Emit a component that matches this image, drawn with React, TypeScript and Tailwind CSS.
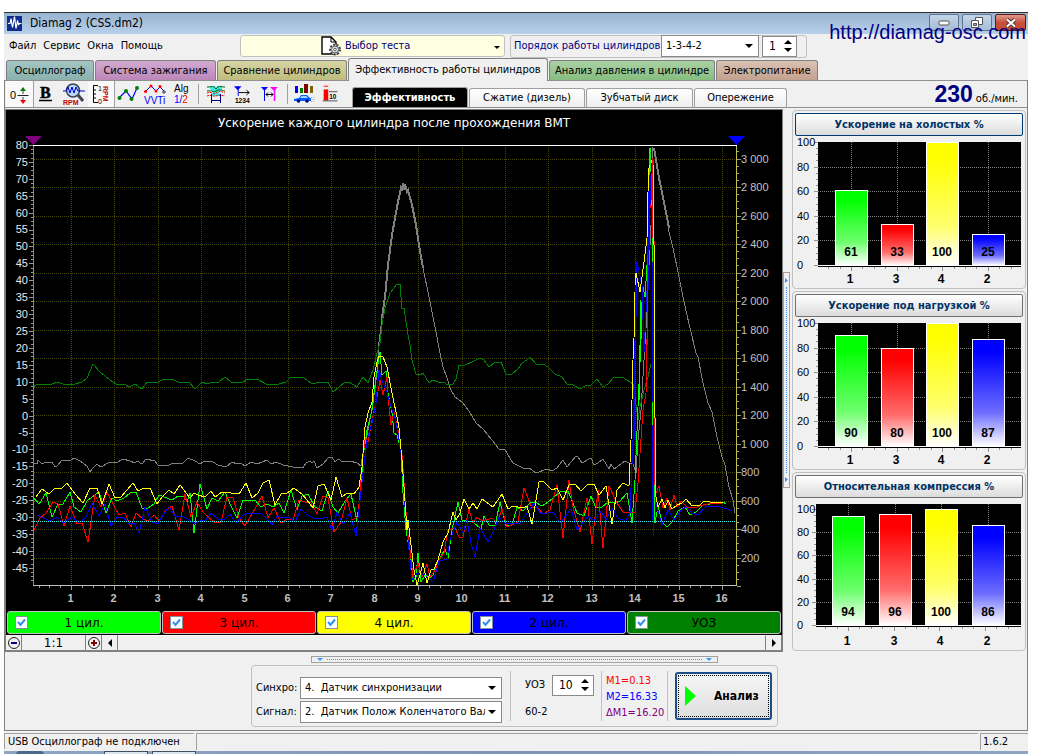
import { useState } from 'react';
import type { ReactNode } from 'react';

const UI_FONT = "font-['DejaVu_Sans_Condensed','DejaVu_Sans',sans-serif]";

const pageTabs = [
  { label: 'Осциллограф', tone: 'from-[#a3c6c4] to-[#8bb0ae]', width: 'w-[88px]' },
  { label: 'Система зажигания', tone: 'from-[#d3aad1] to-[#bb88b9]', width: 'w-[121px]' },
  { label: 'Сравнение цилиндров', tone: 'from-[#d6d4a4] to-[#bfbc7e]', width: 'w-[130px]' },
  { label: 'Эффективность работы цилиндров', tone: 'from-[#f0f0f0] to-[#f0f0f0]', width: 'w-[200px]' },
  { label: 'Анализ давления в цилиндре', tone: 'from-[#abd1a5] to-[#86bd80]', width: 'w-[166px]' },
  { label: 'Электропитание', tone: 'from-[#dac2b4] to-[#c3a18f]', width: 'w-[102px]' },
];

const viewTabs = [
  { label: 'Эффективность', width: 'w-[116px]' },
  { label: 'Сжатие (дизель)', width: 'w-[116px]' },
  { label: 'Зубчатый диск', width: 'w-[107px]' },
  { label: 'Опережение', width: 'w-[93px]' },
];

const legend = [
  { label: '1 цил.', bg: 'bg-[#00ff00]' },
  { label: '3 цил.', bg: 'bg-[#ff0000]' },
  { label: '4 цил.', bg: 'bg-[#ffff00]' },
  { label: '2 цил.', bg: 'bg-[#0000ff]' },
  { label: 'УОЗ', bg: 'bg-[#008000]' },
];

const SPEED_A =
  '33,463 37,464 38,460 42,464 46,462 48,463 52,462 55,467 57,466 62,460 70,461 74,458 80,461 87,466 90,472 93,468 97,464 101,467 108,463 118,462 123,459 130,461 135,463 137,461 142,464 146,459 155,461 158,465 167,466 173,463 183,463 188,458 195,461 200,464 205,461 213,462 218,465 226,467 232,462 237,464 241,463 245,466 251,462 257,464 267,460 271,464 276,462 283,465 293,467 303,468 306,463 310,461 312,463 314,461 317,468 323,464 328,458 332,457 335,462 338,459 343,462 350,461 357,463 361,466 363,453 368,430 373,403 377,373 379,342 382,318';
const SPEED_PEAK =
  '382,318 385,297 388,265 392,235 395,218 398,202 401,188 402,191 403,183 404,190 405,184 407,192 408,190 412,205 416,225 419,245 423,268';
const SPEED_B =
  '423,268 428,292 432,312 436,332 440,353 443,367 447,378 450,388 455,397 462,402 469,411 476,423 483,429 492,440 499,449 505,450 513,463 523,468 529,468 536,473 547,469 552,471 557,468 563,460 567,467 576,456 578,457 582,463 591,458 594,465 598,463 603,459 609,469 611,464 614,469 625,461 629,463 633,464 636,473 638,440 641,410 644,360 647,312 649,265 652,205 653,147';
const SPEED_FALL =
  '654,148 659,178 664,202 669,232 673,248 678,272 684,302 690,328 696,353 698,357 703,383 708,403 712,412 717,437 722,457 725,465 729,487 733,500 735,513';
const ADVANCE =
  '33,387 38,384 52,384 57,382 63,384 75,384 82,382 87,378 93,364 100,372 110,380 116,384 125,384 129,387 135,384 142,389 147,382 158,382 164,379 172,379 178,382 189,382 195,389 202,382 207,384 213,382 219,382 225,377 231,382 243,382 248,379 257,379 266,384 279,384 286,382 291,377 303,377 312,384 320,382 328,382 333,392 345,382 349,382 357,387 363,377 368,383 373,370 377,353 380,343 382,325 385,308 390,293 397,284 400,284 402,309 404,308 408,335 410,345 412,360 416,374 420,375 423,373 429,383 433,380 438,382 444,382 447,385 453,384 456,379 459,365 463,366 467,364 472,362 480,358 484,360 489,367 495,362 501,362 506,374 512,374 518,369 522,363 527,360 530,357 536,364 543,364 548,367 555,374 562,377 567,384 573,385 580,389 585,386 591,385 597,379 603,387 608,384 614,377 622,377 627,380 633,384 635,397 638,420 640,407 644,390 648,377 651,364';
const CYL_4 =
  '36,497 42,489 49,494 55,488 61,489 67,483 75,494 83,503 90,488 97,488 102,504 109,484 115,498 121,497 133,483 138,491 144,488 150,488 157,504 162,497 169,490 174,494 180,485 190,498 194,493 198,495 205,497 211,491 215,497 222,492 239,494 246,483 252,498 258,493 263,483 269,480 275,505 281,494 287,493 294,488 302,494 307,500 313,508 318,486 324,484 331,500 336,477 342,497 347,493 354,494 359,487 362,467 365,427 368,413 372,402 374,377 377,362 379,356 383,357 387,367 392,393 397,417 399,428 402,460 404,487 407,530 408,520 412,553 414,570 417,585 420,575 423,563 427,583 431,570 434,569 438,560 443,542 448,533 453,512 456,520 460,513 464,499 469,509 473,503 477,509 482,499 493,507 502,494 508,509 513,506 523,508 527,506 532,524 539,482 543,481 552,490 557,488 563,500 569,485 575,484 581,491 587,485 594,484 599,495 606,486 612,524 617,490 623,483 629,486 631,440 633,360 634,338 635,292 636,273 640,292 644,262 647,238 648,192 649,168 652,160 654,245 654,353 655,440 656,497 658,507 662,499 665,508 668,500 672,509 677,505 682,503 686,499 692,506 700,505 704,501 710,502 720,502 723,503';
const CYL_1 =
  '33,497 39,504 46,493 52,517 58,504 63,504 70,492 74,507 81,512 87,501 99,492 106,513 112,498 117,501 124,498 130,493 136,492 142,508 148,508 154,504 159,495 172,500 178,496 184,497 187,502 190,493 194,533 200,484 207,509 212,498 218,501 225,492 231,506 237,518 243,500 255,500 261,507 267,504 273,507 279,503 284,513 291,490 297,510 302,496 308,494 315,507 322,511 328,491 333,507 338,513 345,501 351,494 357,521 361,487 363,457 367,430 372,410 376,377 380,352 382,375 386,371 388,393 392,413 394,433 397,435 401,450 403,493 406,530 410,553 413,582 416,577 418,553 421,582 425,575 430,578 433,575 437,563 445,549 448,558 452,530 458,502 462,520 473,522 481,529 484,516 489,525 495,526 500,502 506,526 512,525 517,507 523,511 530,503 535,502 542,506 548,502 553,498 560,492 568,491 577,513 584,516 591,496 596,508 602,507 608,502 615,503 620,501 627,493 632,523 635,480 638,407 641,340 642,302 643,287 645,297 647,265 648,215 650,148 651,172 653,262 654,403 655,523 658,506 662,522 667,527 672,522 678,511 685,507 690,515 696,512 703,505 717,503 723,502 726,504';
const CYL_3 =
  '33,532 40,518 46,513 53,502 58,504 64,526 70,506 77,524 82,523 88,542 95,495 101,507 107,492 114,506 119,515 125,513 131,527 136,513 143,519 148,521 154,515 159,521 166,510 172,506 179,530 185,494 191,517 197,502 203,512 215,523 221,522 227,497 233,498 239,518 245,526 256,507 262,496 268,518 274,508 281,523 287,519 293,520 299,500 305,502 311,503 317,514 323,496 328,498 334,532 341,522 347,498 352,520 358,517 362,467 365,438 368,442 372,420 376,403 380,380 383,395 387,377 388,397 391,425 394,412 398,430 402,455 404,483 407,527 410,550 413,577 418,563 422,577 427,564 430,577 435,570 440,558 444,553 448,530 455,528 459,537 463,537 469,509 473,523 477,517 482,521 492,518 497,523 502,509 507,527 518,522 524,488 532,508 537,507 543,514 550,510 557,485 563,538 569,480 573,507 580,532 587,498 592,544 598,490 603,548 609,486 617,503 623,512 635,512 638,483 643,410 646,393 647,340 648,248 651,188 653,158 654,238 655,420 656,493 659,486 663,508 667,498 670,510 674,495 677,507 681,501 688,508 697,507 703,505 713,503 722,503';
const CYL_2 =
  '37,515 50,521 57,517 63,523 72,517 79,523 86,517 92,503 99,516 105,504 111,526 117,517 123,517 128,523 134,523 139,533 145,507 152,522 158,524 163,515 169,507 175,516 182,516 188,519 194,524 200,521 206,520 211,513 218,519 225,519 230,514 236,523 243,515 248,513 261,513 266,518 272,525 277,516 283,518 289,517 295,522 301,509 307,515 313,518 320,519 327,517 332,530 337,512 343,524 350,513 356,536 360,500 363,473 367,440 372,423 376,403 379,370 383,383 387,392 391,407 395,418 398,433 402,460 405,507 408,540 412,580 417,573 425,575 433,582 439,561 447,559 450,540 457,522 463,533 467,520 471,543 475,557 480,528 488,542 493,532 499,517 505,523 520,523 527,513 534,503 541,514 553,512 560,523 571,509 577,530 588,516 594,521 601,511 606,520 612,508 618,518 625,521 630,513 633,440 635,340 636,318 637,262 642,285 644,352 647,292 648,202 650,175 651,205 653,292 653,537 655,500 662,525 668,510 674,520 682,509 686,507 692,513 698,515 705,507 717,506 727,509 732,511';

// near-vertical parts of the second surge: x, from, to, colour
const SPIKES: [number, number, number, string][] = [
  [635, 285, 345, '#0000ff'],
  [634, 345, 440, '#0000ff'],
  [640, 300, 345, '#00ff00'],
  [639, 345, 400, '#00ff00'],
  [647, 255, 345, '#ff0000'],
  [649, 192, 250, '#0000ff'],
  [648, 200, 290, '#0000ff'],
  [651, 175, 200, '#ff0000'],
  [650, 148, 170, '#00ff00'],
  [652, 158, 238, '#ff0000'],
  [653, 165, 245, '#ffff00'],
  [652, 240, 262, '#00ff00'],
  [652, 262, 520, '#0000ff'],
  [653, 245, 537, '#0000ff'],
  [652, 402, 425, '#00ff00'],
  [654, 245, 418, '#ffff00'],
  [654, 418, 485, '#ff0000'],
  [655, 418, 495, '#ffff00'],
  [654, 487, 523, '#00ff00'],
];

const range = (n: number) => Array.from({ length: n }, (_, i) => i);
const px = (v: number) => Math.round(v) + 0.5;

const xAt = (v: number) => px(71 + (v - 1) * 43.4);
const yLeft = (v: number) => px(415.5 - v * 3.383);
const yRight = (v: number) => px(586 - v * 0.1425);

function AccelerationChart() {
  return (
    <svg viewBox="6 110 776 500" className="block h-auto w-full bg-black" role="img" aria-label="Ускорение каждого цилиндра">
      <text x="394" y="127" fill="#fff" fontSize="12" textAnchor="middle" fontFamily="DejaVu Sans, sans-serif">
        Ускорение каждого цилиндра после прохождения ВМТ
      </text>
      <g shapeRendering="crispEdges" fill="none" strokeWidth="1">
        <g stroke="#484800" strokeDasharray="1 1">
          {range(16).map(i => (
            <line key={i} x1={xAt(i + 1)} x2={xAt(i + 1)} y1="147" y2="585" />
          ))}
          {range(15).map(i => (
            <line key={i} x1="34" x2="736" y1={yRight((i + 1) * 200)} y2={yRight((i + 1) * 200)} />
          ))}
        </g>

        <g stroke="#808080">
          <polyline points={SPEED_A} />
          <polyline points={SPEED_PEAK} strokeWidth="2" />
          <polyline points={SPEED_B} />
          <polyline points={SPEED_FALL} />
          <polyline points="654,148 659,178 664,202 669,228" strokeWidth="2" />
        </g>
        <polyline points={ADVANCE} stroke="#008000" />
        <polyline points={CYL_1} stroke="#00ff00" />
        <polyline points={CYL_3} stroke="#ff0000" />
        <polyline points={CYL_2} stroke="#0000ff" />
        <polyline points={CYL_4} stroke="#ffff00" />
        {SPIKES.map(([x, from, to, color]) => (
          <line key={`${x}-${from}`} x1={x + 0.5} x2={x + 0.5} y1={from} y2={to} stroke={color} />
        ))}
        <line x1="34" x2="736" y1="521.5" y2="521.5" stroke="#40ffff" strokeDasharray="1 1" />

        {/* frame */}
        <line x1="33" x2="737" y1="145.5" y2="145.5" stroke="#fff" />
        <line x1="33.5" x2="33.5" y1="146" y2="586" stroke="#4cb04c" />
        <line x1="736.5" x2="736.5" y1="146" y2="586" stroke="#c0c050" />
        <line x1="33" x2="737" y1="585.5" y2="585.5" stroke="#c0c0c0" />

        {/* ticks */}
        <g stroke="#9a9a9a">
          {range(104).map(i => {
            const y = px(145 + i * 4.228);
            return y < 585 ? <line key={i} x1={i % 4 ? 31 : 29} x2="33" y1={y} y2={y} /> : null;
          })}
          {range(62).map(i => {
            const y = px(586 - i * 7.125);
            return y > 147 ? <line key={i} x1="737" x2={i % 4 ? 739 : 741} y1={y} y2={y} /> : null;
          })}
          {range(64).map(i => {
            const x = px(38.5 + i * 10.85);
            return <line key={i} x1={x} x2={x} y1="586" y2={i % 4 === 3 ? 590 : 588} />;
          })}
        </g>
      </g>
      <path d="M25 136h17l-8.500 9z" fill="#800080" />
      <path d="M728 136h17l-8.500 9z" fill="#0000ff" />
      <g fontSize="11" fill="#e8e8e8" textAnchor="end" fontFamily="Liberation Sans, sans-serif">
        {range(26).map(i => (
          <text key={i} x="28" y={yLeft(80 - i * 5) + 3.5}>
            {80 - i * 5}
          </text>
        ))}
      </g>
      <g fontSize="11" fill="#c0c0c0" fontFamily="Liberation Sans, sans-serif">
        {range(15).map(i => {
          const v = (i + 1) * 200;
          return (
            <text key={v} x="741" y={yRight(v) + 3.5}>
              {v >= 1000 ? `${Math.floor(v / 1000)} ${String(v % 1000).padStart(3, '0')}` : v}
            </text>
          );
        })}
      </g>
      <g fontSize="11" fill="#c0c0c0" fontWeight="bold" textAnchor="middle" fontFamily="Liberation Sans, sans-serif">
        {range(16).map(i => (
          <text key={i} x={xAt(i + 1) - 1} y="602">
            {i + 1}
          </text>
        ))}
      </g>
    </svg>
  );
}

const bars = [
  { name: '1', color: '#00ff00', mid: '#6cff6c' },
  { name: '3', color: '#ff0000', mid: '#ff6c6c' },
  { name: '4', color: '#ffff00', mid: '#ffff6c' },
  { name: '2', color: '#0000ff', mid: '#6c6cff' },
];

type BarPanelProps = {
  id: string;
  title: string;
  values: number[];
  centers: number[];
  left: number;
  full: number;
  base: number;
  active?: boolean;
};

function BarPanel({ id, title, values, centers, left, full, base, active }: BarPanelProps) {
  const y = (v: number) => Math.round(base - ((base - full) * v) / 100);
  const step = (base - full) / 20;
  return (
    <section className="rounded-[4px] border border-[#c0c0c0] p-[2px]">
      <button
        type="button"
        className={`block h-[23px] w-full rounded-[2px] border bg-linear-to-b from-white to-[#dcdcdc] text-center text-[11px] leading-[20px] font-bold text-[#003366] ${
          active ? 'border-[#003c74]' : 'border-[#707070]'
        }`}
      >
        {title}
      </button>
      <svg viewBox="-1 0 228 150" className="block h-auto w-full" role="img" aria-label={title}>
        <defs>
          {bars.map(b => (
            <linearGradient key={b.name} id={`${id}-${b.name}`} x1="0" y1="0" x2="0" y2="1">
              <stop offset="0.120" stopColor={b.color} />
              <stop offset="0.680" stopColor={b.mid} />
              <stop offset="1" stopColor="#fff" />
            </linearGradient>
          ))}
        </defs>
        <g shapeRendering="crispEdges">
          <rect x={left} y="6" width={225 - left} height={base - 4} fill="#000" />
          <g stroke="#808080" strokeDasharray="1 1">
            {[20, 40, 60, 80].map(v => (
              <line key={v} x1={left} x2="225" y1={y(v) + 0.5} y2={y(v) + 0.5} />
            ))}
            {centers.map(c => (
              <line key={c} x1={c + 0.5} x2={c + 0.5} y1="6" y2={base} />
            ))}
          </g>
          <g stroke="#909090">
            {range(21).map(i => (
              <line key={i} x1={left - (i % 4 ? 2 : 4)} x2={left} y1={px(base - i * step)} y2={px(base - i * step)} />
            ))}
            {range(17).map(i => {
              const x = px(centers[0] + (i - 2) * 11.4);
              return <line key={i} x1={x} x2={x} y1={base + 2} y2={base + (i % 4 === 2 ? 6 : 4)} />;
            })}
          </g>
          <line x1={left} x2="225" y1={base + 0.5} y2={base + 0.5} stroke="#fff" />
          {bars.map((b, i) => (
            <rect
              key={b.name}
              x={centers[i] - 15.5}
              y={y(values[i]) + 0.5}
              width="32"
              height={base - y(values[i])}
              fill={`url(#${id}-${b.name})`}
              stroke="#fff"
            />
          ))}
        </g>
        <g fontSize="11" fill="#000" fontFamily="Liberation Sans, sans-serif">
          {[0, 20, 40, 60, 80, 100].map(v => (
            <text key={v} x="1" y={y(v) + 4}>
              {v}
            </text>
          ))}
        </g>
        <g fontSize="12" fontWeight="bold" textAnchor="middle" fontFamily="Liberation Sans, sans-serif">
          {bars.map((b, i) => (
            <g key={b.name}>
              <text x={centers[i]} y={base - 9}>
                {values[i]}
              </text>
              <text x={centers[i] - 1} y="147">
                {b.name}
              </text>
            </g>
          ))}
        </g>
      </svg>
    </section>
  );
}

function ToolButton({ label, pressed, width, children }: { label: string; pressed?: boolean; width: string; children: ReactNode }) {
  return (
    <button
      type="button"
      aria-label={label}
      aria-pressed={pressed}
      className={`flex h-[26px] shrink-0 items-center justify-center ${width} ${pressed ? 'border-r border-[#a0a0a0] bg-[#f9f9f9]' : ''}`}
    >
      <svg viewBox="0 0 24 24" className="size-6" fill="none">
        {children}
      </svg>
    </button>
  );
}

function Separator() {
  return <span className="h-[20px] w-px shrink-0 bg-[#a0a0a0]" />;
}

function Toolbar() {
  return (
    <div className="flex items-center" role="toolbar">
      <ToolButton label="Ноль" pressed width="w-[28px]">
        <text x="2" y="17" fontSize="11" fill="#000" fontFamily="Liberation Sans, sans-serif">0</text>
        <path d="M9.500 13.500h11" stroke="#222" />
        <path d="M15 7v5M15 15v4" stroke="#444" />
        <path d="M15 5l3 4h-6z" fill="#008000" />
        <path d="M15 22l3-4h-6z" fill="#ff0000" />
      </ToolButton>
      <ToolButton label="Жирные линии" width="w-[25px]">
        <text x="5" y="16" fontSize="16" fontWeight="bold" fill="#000" stroke="#000" strokeWidth="0.500" fontFamily="Liberation Serif, serif">B</text>
        <path d="M4 18.500h13" stroke="#000" strokeWidth="1.500" />
      </ToolButton>
      <ToolButton label="Поиск RPM" width="w-[29px]">
        <circle cx="11" cy="8.500" r="6.500" fill="#b5d9f8" stroke="#3d4450" strokeWidth="1.500" />
        <path d="M1 9h3l2-4 2 6 2-6 2 6 2-6 2 4h7" stroke="#0000d0" strokeWidth="1" />
        <path d="M16 13l5 6" stroke="#3d4450" strokeWidth="3" />
        <text x="1" y="23" fontSize="7" fontWeight="bold" fill="#c00000" fontFamily="Liberation Sans, sans-serif">RPM</text>
      </ToolButton>
      <ToolButton label="Шкала RPM" pressed width="w-[27px]">
        <path d="M9 3.500H4.500v17H9M4.500 8H7M4.500 12H7M4.500 16H7" stroke="#000" />
        <text x="9" y="9" fontSize="7" fill="#000" fontFamily="Liberation Sans, sans-serif">1</text>
        <text x="9" y="22" fontSize="7" fill="#000" fontFamily="Liberation Sans, sans-serif">0</text>
        <text x="4" y="-14" fontSize="7" fontWeight="bold" fill="#c00000" transform="rotate(90)" fontFamily="Liberation Sans, sans-serif">RPM</text>
      </ToolButton>
      <ToolButton label="Точки" width="w-[25px]">
        <path d="M3 16l7-7 6 8 5-11" stroke="#0000ff" strokeWidth="1.200" />
        <g fill="#008000">
          <circle cx="3.500" cy="16" r="2" />
          <circle cx="10" cy="9" r="2" />
          <circle cx="15.500" cy="17" r="2" />
          <circle cx="21" cy="6" r="2" />
        </g>
      </ToolButton>
      <ToolButton label="VVTi" width="w-[29px]">
        <path d="M2 10l6-6 5 5 4-4 5 5" stroke="#0000ff" />
        <g fill="#ff0000">
          <circle cx="2.500" cy="9.500" r="1.500" />
          <circle cx="8" cy="4" r="1.500" />
          <circle cx="13" cy="9" r="1.500" />
          <circle cx="17" cy="4.500" r="1.500" />
        </g>
        <circle cx="21" cy="10" r="1.200" fill="#fff" stroke="#222" />
        <text x="1" y="22" fontSize="10" fill="#0000ff" fontFamily="Liberation Sans, sans-serif">VVTi</text>
      </ToolButton>
      <ToolButton label="Алгоритм" width="w-[27px]">
        <text x="3" y="10" fontSize="10" fill="#000" fontFamily="Liberation Sans, sans-serif">Alg</text>
        <text x="3" y="21" fontSize="10" fill="#0000ff" fontFamily="Liberation Sans, sans-serif">
          1/<tspan fill="#ff0000">2</tspan>
        </text>
      </ToolButton>
      <span className="w-[2px]" />
      <Separator />
      <ToolButton label="Диапазон" width="w-[33px]">
        <path d="M6 4h5l1 2 1-2h5v3l-3 3 2 4H7l2-4-3-3z" fill="#40e8e8" />
        <path d="M3 5c6 0 6-2 9 2 3-4 4-2 9-2M3 9c6-1 6 2 9 0s5-1 9 0" stroke="#006000" />
        <path d="M3 11c5-2 6 2 9 0s5-2 9 0M3 14c5-2 6 1 9 0s5-1 9 0" stroke="#ff0000" strokeDasharray="2 1" />
        <path d="M7.500 12v9M16.500 12v9M8 18.500h8" stroke="#000080" />
      </ToolButton>
      <ToolButton label="Порядок" width="w-[23px]">
        <path d="M2 4h8l-4 4z" fill="#0000ff" />
        <path d="M6.500 4v10" stroke="#0000ff" />
        <path d="M7 10.500h11M15 8l3 2.500-3 2.500" stroke="#000" />
        <text x="3" y="21" fontSize="7" fontWeight="bold" fill="#000" fontFamily="Liberation Sans, sans-serif">1234</text>
      </ToolButton>
      <ToolButton label="Маркеры" width="w-[28px]">
        <path d="M4 5h7l-3.500 4z" fill="#0000ff" />
        <path d="M7.500 5v14" stroke="#0000ff" />
        <path d="M13 5h8l-4 4z" fill="#ff00ff" />
        <path d="M17.500 5v14" stroke="#ff00ff" strokeWidth="1.500" />
        <path d="M9 12.500h7M11 10.500l-2 2 2 2M14 10.500l2 2-2 2" stroke="#000" />
      </ToolButton>
      <span className="w-1" />
      <Separator />
      <ToolButton label="Автомобиль" width="w-[32px]">
        <path d="M3 4h3v7H3z" fill="#0000ff" />
        <path d="M8 6h3v5H8z" fill="#008000" />
        <path d="M12 2h4v9h-4z" fill="#800000" />
        <path d="M18 4h3v7h-3z" fill="#806000" />
        <path d="M2 17l5-1 2-3h6l3 3h1v3H2z" fill="#0060ff" />
        <path d="M9.500 14h5l1.500 2h-8z" fill="#9fd0ff" />
        <circle cx="6.500" cy="19" r="1.800" fill="#000080" />
        <circle cx="15" cy="19" r="1.800" fill="#000080" />
        <path d="M19 15.500h4M20 17.500h3M19 19.500h4" stroke="#aaa" strokeDasharray="1 1" />
      </ToolButton>
      <ToolButton label="Сетка 10" width="w-[22px]">
        <path d="M4 3.500h5" stroke="#ff0000" />
        <path d="M4 7h5v12H4z" fill="#ff0000" />
        <path d="M3 19.500h16M10 9.500h9" stroke="#444" />
        <text x="10" y="17.500" fontSize="7" fontWeight="bold" fill="#000" fontFamily="Liberation Sans, sans-serif">10</text>
      </ToolButton>
    </div>
  );
}

function Caret({ className }: { className: string }) {
  return (
    <svg viewBox="0 0 8 4" className={`pointer-events-none h-1 w-2 ${className}`}>
      <path d="M0 0h8L4 4z" fill="#000" />
    </svg>
  );
}

function Dropdown({ label, value, className }: { label: string; value: string; className: string }) {
  return (
    <span className={`relative block ${className}`}>
      <select
        aria-label={label}
        className="h-[22px] w-full appearance-none rounded-none border border-[#8a8a8a] bg-white pl-1 pr-4 text-[11px] text-black"
      >
        <option>{value}</option>
      </select>
      <Caret className="absolute top-[9px] right-[6px]" />
    </span>
  );
}

function Spinner({ label, value, className }: { label: string; value: string; className: string }) {
  const [val, setVal] = useState(value);
  return (
    <span className={`flex h-[21px] items-center border border-[#8a8a8a] bg-white pr-1 ${className}`}>
      <input
        aria-label={label}
        inputMode="numeric"
        value={val}
        onChange={e => setVal(e.target.value)}
        className="h-full w-full min-w-0 bg-transparent pl-[6px] text-[12px]"
      />
      <span className="flex shrink-0 flex-col gap-[4px]">
        <button type="button" aria-label="Больше" onClick={() => setVal(String(Number(val) + 1))}>
          <Caret className="block rotate-180" />
        </button>
        <button type="button" aria-label="Меньше" onClick={() => setVal(String(Number(val) - 1))}>
          <Caret className="block" />
        </button>
      </span>
    </span>
  );
}

function TitleBar() {
  return (
    <header className="relative flex h-[22px] items-start justify-between border-t border-[#303030] bg-linear-to-b from-[#98b3d0] to-[#b8d0ea] pr-[2px] pl-[3px]">
      <div className="flex items-center gap-2 pt-px">
        <svg viewBox="0 0 15 15" className="size-[15px]">
          <rect width="15" height="15" fill="#102c8c" />
          <path d="M1 7.500h2l1-5 1.500 9 2-11 1.500 12 1.500-8 1 4 1-1h2" fill="none" stroke="#fff" strokeWidth="1.200" />
        </svg>
        <h1 className="text-[12px] leading-[18px]">Diamag 2 (CSS.dm2)</h1>
      </div>
      <div className="flex gap-[3px] pt-px">
        <button type="button" aria-label="Свернуть" className="flex h-[17px] w-[30px] items-center justify-center rounded-[2px] border border-[#60748c] bg-linear-to-b from-[#c4d5e8] to-[#a5bdd8]">
          <svg viewBox="0 0 12 6" className="h-[6px] w-3">
            <rect x="1" y="1" width="10" height="4" rx="1" fill="#fff" stroke="#555" />
          </svg>
        </button>
        <button type="button" aria-label="Восстановить" className="flex h-[17px] w-[30px] items-center justify-center rounded-[2px] border border-[#60748c] bg-linear-to-b from-[#c4d5e8] to-[#a5bdd8]">
          <svg viewBox="0 0 12 11" className="h-[11px] w-3" fill="#fff" stroke="#555">
            <path d="M4.500.5h7v7h-7z" />
            <path d="M.5 3.500h7v7h-7z" />
            <path d="M2.500 6.500h3v2h-3z" fill="#9ab" />
          </svg>
        </button>
        <button type="button" aria-label="Закрыть" className="flex h-[17px] w-[31px] items-center justify-center rounded-[2px] border border-[#5a1a14] bg-linear-to-b from-[#e09a8c] via-[#c8503c] to-[#c44a30]">
          <svg viewBox="0 0 12 10" className="h-[10px] w-3">
            <path d="M2 1.500l8 7M10 1.500l-8 7" stroke="#503030" strokeWidth="4" />
            <path d="M2 1.500l8 7M10 1.500l-8 7" stroke="#fff" strokeWidth="2.200" />
          </svg>
        </button>
      </div>
      <a href="http://diamag-osc.com" className="absolute top-[7px] right-[2px] z-10 font-['Liberation_Sans',sans-serif] text-[20px] leading-[24px] text-[#000080]">
        http://diamag-osc.com
      </a>
    </header>
  );
}

function MenuBar() {
  return (
    <div className="flex h-6 items-center">
      <nav className="flex w-[236px] shrink-0 gap-[7px] pl-[5px]">
        {['Файл', 'Сервис', 'Окна', 'Помощь'].map(item => (
          <button key={item} type="button">
            {item}
          </button>
        ))}
      </nav>
      <button
        type="button"
        aria-haspopup="menu"
        className="relative flex h-[22px] w-[265px] items-center rounded-[3px] border border-[#c0c0c0] bg-[#ffffe1] pl-[80px] text-[#000080]"
      >
        <svg viewBox="0 0 22 20" className="mr-[2px] h-5 w-[22px]" fill="none">
          <path d="M1 1h9l5 5v12H1z" fill="#fff" stroke="#000" strokeWidth="1.400" />
          <path d="M10 1v5h5" stroke="#000" />
          <circle cx="14" cy="13.500" r="5" fill="#ddd" stroke="#444" strokeWidth="2" strokeDasharray="2 1.500" />
          <circle cx="14" cy="13.500" r="3.500" fill="#e8e8e8" stroke="#555" />
          <circle cx="14" cy="13.500" r="1.300" fill="#fff" stroke="#555" />
        </svg>
        Выбор теста
        <svg viewBox="0 0 6 3" className="absolute top-[10px] right-[4px] h-[3px] w-[6px]">
          <path d="M0 0h6L3 3z" fill="#000" />
        </svg>
      </button>
      <div className="ml-[5px] flex h-[23px] w-[297px] items-center rounded-[3px] border border-[#c0c0c0] pl-[3px]">
        <span className="w-[147px] shrink-0 whitespace-nowrap text-[#000080]">Порядок работы цилиндров</span>
        <Dropdown label="Порядок работы цилиндров" value="1-3-4-2" className="w-[98px]" />
        <Spinner label="Цилиндр" value="1" className="ml-[3px] w-[35px]" />
      </div>
    </div>
  );
}

function PageTabs() {
  return (
    <div role="tablist" className="flex h-[22px] items-end gap-px pl-[2px]">
      {pageTabs.map(tab => {
        const active = tab.label === 'Эффективность работы цилиндров';
        return (
          <button
            key={tab.label}
            type="button"
            role="tab"
            aria-selected={active}
            className={`shrink-0 rounded-t-[3px] border border-b-0 border-[#808080] bg-linear-to-b text-center whitespace-nowrap ${tab.tone} ${tab.width} ${
              active ? 'relative -mb-px h-[23px]' : 'h-[20px]'
            }`}
          >
            {tab.label}
          </button>
        );
      })}
    </div>
  );
}

function ViewTabs() {
  return (
    <div role="tablist" className="ml-[10px] flex items-end gap-px self-end">
      {viewTabs.map((tab, i) => (
        <button
          key={tab.label}
          type="button"
          role="tab"
          aria-selected={i === 0}
          className={`shrink-0 rounded-t-[3px] border border-b-0 border-[#a0a0a0] text-center whitespace-nowrap ${tab.width} ${
            i === 0 ? 'h-[20px] bg-black font-bold text-white' : 'h-[19px] bg-linear-to-b from-white to-[#eee]'
          }`}
        >
          {tab.label}
        </button>
      ))}
    </div>
  );
}

function Legend() {
  return (
    <div className="flex gap-px bg-black p-px">
      {legend.map(item => (
        <label
          key={item.label}
          className={`relative flex h-[23px] flex-1 items-center justify-center rounded-[3px] border border-[#c0c0c0] font-['DejaVu_Sans',sans-serif] text-[12px] text-black ${item.bg}`}
        >
          <input type="checkbox" defaultChecked className="peer absolute top-1 left-[7px] size-[13px] appearance-none border border-[#8090a0] bg-white" />
          <svg viewBox="0 0 13 13" className="pointer-events-none absolute top-1 left-[7px] hidden size-[13px] peer-checked:block">
            <path d="M3 6l2.500 3L10 3.500" fill="none" stroke="#3090f0" strokeWidth="2" />
          </svg>
          {item.label}
        </label>
      ))}
    </div>
  );
}

function ScrollRow() {
  const end = 'flex w-4 shrink-0 items-center justify-center border-r border-b border-[#808080]';
  return (
    <div className="flex h-4 bg-[#f0f0f0]">
      <button type="button" aria-label="Уменьшить" className={end}>
        <svg viewBox="0 0 14 14" className="size-[14px]">
          <circle cx="7" cy="7" r="5.500" fill="none" stroke="#222" />
          <path d="M4 7h6" stroke="#000080" strokeWidth="2" />
        </svg>
      </button>
      <output className="w-16 shrink-0 border-r border-b border-[#808080] text-center font-['DejaVu_Sans',sans-serif] text-[12px] leading-[16px]">1:1</output>
      <button type="button" aria-label="Увеличить" className={end}>
        <svg viewBox="0 0 14 14" className="size-[14px]">
          <circle cx="7" cy="7" r="5.500" fill="none" stroke="#222" />
          <path d="M4 7h6M7 4v6" stroke="#800000" strokeWidth="2" />
        </svg>
      </button>
      <button type="button" aria-label="Влево" className={end}>
        <svg viewBox="0 0 4 8" className="h-2 w-1">
          <path d="M4 0v8L0 4z" />
        </svg>
      </button>
      <div className="flex-1 border-t border-r border-b border-t-white border-r-[#808080] border-b-[#808080]" />
      <button type="button" aria-label="Вправо" className={end}>
        <svg viewBox="0 0 4 8" className="h-2 w-1">
          <path d="M0 0v8l4-4z" />
        </svg>
      </button>
    </div>
  );
}

function VerticalSplitter() {
  return (
    <div className="mt-[163px] flex h-[216px] w-[7px] shrink-0 flex-col items-center justify-between border border-[#a0a0a0] py-[5px]">
      <svg viewBox="0 0 3 5" className="h-[5px] w-[3px]">
        <path d="M0 0v5l3-2.500z" fill="#3399ff" />
      </svg>
      <span className="my-1 flex-1 border-l border-dotted border-[#3399ff]" />
      <svg viewBox="0 0 3 5" className="h-[5px] w-[3px]">
        <path d="M0 0v5l3-2.500z" fill="#3399ff" />
      </svg>
    </div>
  );
}

function HorizontalSplitter() {
  return (
    <div className="mt-1 flex h-[7px] w-[407px] items-center justify-between border border-[#a0a0a0] px-[5px]">
      <svg viewBox="0 0 6 3" className="h-[3px] w-[6px]">
        <path d="M0 0h6L3 3z" fill="#3399ff" />
      </svg>
      <span className="mx-1 flex-1 border-t border-dotted border-[#3399ff]" />
      <svg viewBox="0 0 6 3" className="h-[3px] w-[6px]">
        <path d="M0 0h6L3 3z" fill="#3399ff" />
      </svg>
    </div>
  );
}

function ControlPanel() {
  return (
    <div className="mt-[2px] flex h-[62px] w-[527px] items-center rounded-[4px] border border-[#c0c0c0] pl-[4px]">
      <div className="flex w-[246px] flex-col gap-[2px] pt-[12px] pb-1">
        <div className="flex items-center">
          <span className="w-11 shrink-0">Синхро:</span>
          <Dropdown label="Синхро" value={'4.\u00a0 Датчик синхронизации'} className="flex-1" />
        </div>
        <div className="flex items-center">
          <span className="w-11 shrink-0">Сигнал:</span>
          <Dropdown label="Сигнал" value={'2.\u00a0 Датчик Полож Коленчатого Вал'} className="flex-1" />
        </div>
      </div>
      <span className="ml-2 h-[50px] w-px bg-[#c0c0c0]" />
      <div className="ml-[14px] flex flex-col gap-[8px] pt-[2px]">
        <div className="flex items-center">
          <span className="w-[27px]">УОЗ</span>
          <Spinner label="УОЗ" value="10" className="w-[42px]" />
        </div>
        <span>60-2</span>
      </div>
      <span className="ml-[7px] h-[50px] w-px bg-[#c0c0c0]" />
      <div className="ml-1 w-[60px] pt-[2px] text-[11px] leading-[16px] whitespace-nowrap">
        <p className="text-[#ff0000]">M1=0.13</p>
        <p className="text-[#0000ff]">M2=16.33</p>
        <p className="text-[#800080]">ΔM1=16.20</p>
      </div>
      <span className="ml-px h-[50px] w-px bg-[#c0c0c0]" />
      <button
        type="button"
        className="ml-[7px] flex h-[48px] w-[97px] items-center rounded-[3px] border-2 border-[#1c4f86] bg-linear-to-b from-[#f6f6f6] to-[#dedede] p-px text-[12px] font-bold"
      >
        <span className="flex h-full w-full items-center gap-[18px] border border-dotted border-black pl-[6px]">
          <svg viewBox="0 0 11 20" className="h-5 w-[11px]">
            <path d="M0 0v20l11-10z" fill="#00ff00" />
          </svg>
          Анализ
        </span>
      </button>
    </div>
  );
}

export default function App() {
  return (
    <div className={`flex min-h-screen flex-col bg-white pt-3 pr-3 pl-1 text-[11px] leading-[16px] text-black ${UI_FONT}`}>
      <div className="bg-[#f0f0f0]">
        <TitleBar />
        <MenuBar />
        <PageTabs />
        <main className="border-x border-b border-[#808080] pb-[3px]">
          <div className="flex h-[28px] items-center border-y border-[#909090] pl-px">
            <Toolbar />
            <ViewTabs />
            <p className="ml-auto flex items-baseline gap-[3px] pr-[9px]">
              <strong className="font-['Liberation_Sans',sans-serif] text-[23px] leading-[26px] text-[#000080]">230</strong>
              об./мин.
            </p>
          </div>
          <div className="flex items-start pt-px pr-px">
            <div className="min-w-0 flex-1 border border-[#808080]">
              <AccelerationChart />
              <Legend />
              <ScrollRow />
            </div>
            <VerticalSplitter />
            <div className="ml-[2px] flex w-[234px] shrink-0 flex-col gap-[2px] pt-px">
              <BarPanel id="idle" title="Ускорение на холостых %" values={[61, 33, 100, 25]} centers={[55, 101, 146, 192]} left={22} full={6} base={129} active />
              <BarPanel id="load" title="Ускорение под нагрузкой %" values={[90, 80, 100, 87]} centers={[55, 101, 146, 192]} left={22} full={6} base={129} />
              <BarPanel id="comp" title="Относительная компрессия %" values={[94, 96, 100, 86]} centers={[52, 99, 145, 192]} left={20} full={11} base={127} />
            </div>
          </div>
          <div className="flex flex-col items-center pr-[3px]">
            <HorizontalSplitter />
            <ControlPanel />
          </div>
        </main>
        <footer className="flex gap-[2px] pt-[2px] pb-px">
          <span className="h-[16px] w-[190px] border-t border-l border-[#a0a0a0] pl-[3px]">USB Осциллограф не подключен</span>
          <span className="flex-1 border-t border-l border-[#a0a0a0]" />
          <span className="w-[48px] border-t border-l border-[#a0a0a0] pl-[2px]">1.6.2</span>
        </footer>
      </div>
      <div className="flex h-1 gap-1 bg-linear-to-r from-[#8ea6c4] via-[#7d95b5] to-[#8ea6c4] pl-3">
        <span className="h-1 w-7 rounded-t-full bg-[#4a6a8c]" />
        <span className="ml-14 h-1 w-11 border border-b-0 border-[#405060] bg-[#dce6f0]" />
        <span className="h-1 w-11 border border-b-0 border-[#405060] bg-[#dce6f0]" />
      </div>
    </div>
  );
}
